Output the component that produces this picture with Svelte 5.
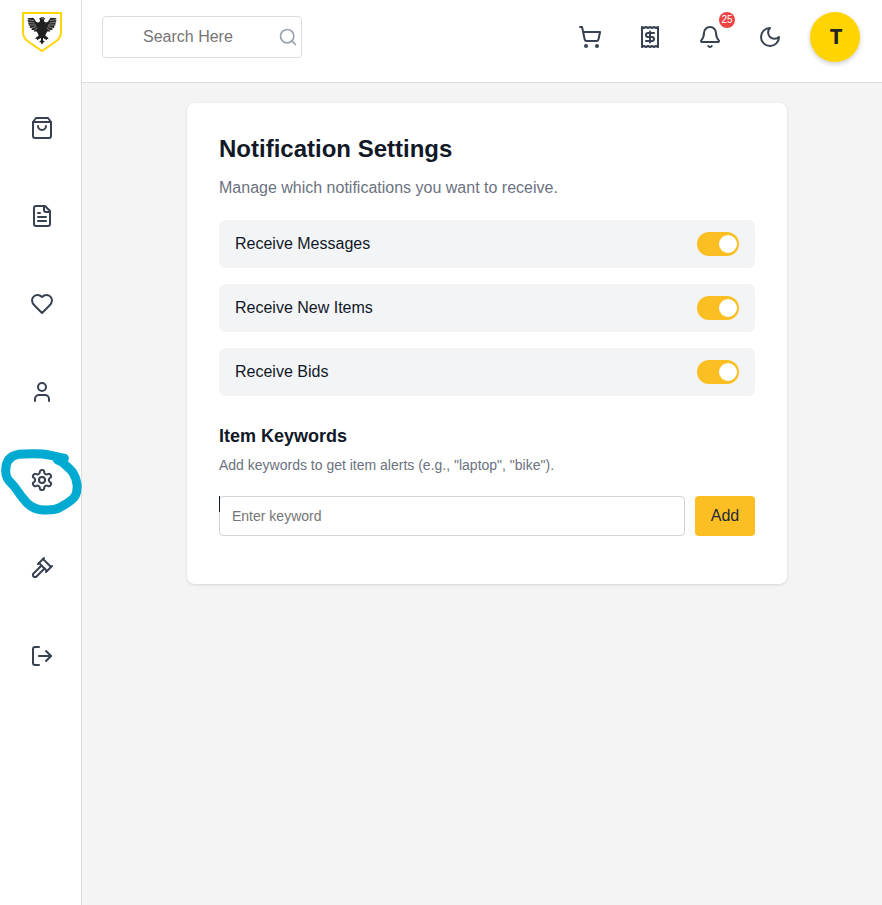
<script>
  const nav = [
    { label: 'Items', paths: ['M6 2 3 6v14a2 2 0 0 0 2 2h14a2 2 0 0 0 2-2V6l-3-4Z', 'M3 6h18', 'M16 10a4 4 0 0 1-8 0'] },
    { label: 'Documents', paths: ['M15 2H6a2 2 0 0 0-2 2v16a2 2 0 0 0 2 2h12a2 2 0 0 0 2-2V7Z', 'M14 2v4a2 2 0 0 0 2 2h4', 'M10 9H8', 'M16 13H8', 'M16 17H8'] },
    { label: 'Favourites', paths: ['M19 14c1.49-1.46 3-3.21 3-5.5A5.5 5.5 0 0 0 16.5 3c-1.76 0-3 .5-4.5 2-1.5-1.5-2.74-2-4.5-2A5.5 5.5 0 0 0 2 8.5c0 2.3 1.5 4.05 3 5.5l7 7Z'] },
    { label: 'Profile', paths: ['M19 21v-2a4 4 0 0 0-4-4H9a4 4 0 0 0-4 4v2', 'M16 7a4 4 0 1 1-8 0a4 4 0 1 1 8 0'] },
    { label: 'Settings', paths: ['M12.22 2h-.44a2 2 0 0 0-2 2v.18a2 2 0 0 1-1 1.73l-.43.25a2 2 0 0 1-2 0l-.15-.08a2 2 0 0 0-2.73.73l-.22.38a2 2 0 0 0 .73 2.73l.15.1a2 2 0 0 1 1 1.72v.51a2 2 0 0 1-1 1.74l-.15.09a2 2 0 0 0-.73 2.73l.22.38a2 2 0 0 0 2.73.73l.15-.08a2 2 0 0 1 2 0l.43.25a2 2 0 0 1 1 1.73V20a2 2 0 0 0 2 2h.44a2 2 0 0 0 2-2v-.18a2 2 0 0 1 1-1.73l.43-.25a2 2 0 0 1 2 0l.15.08a2 2 0 0 0 2.73-.73l.22-.39a2 2 0 0 0-.73-2.73l-.15-.08a2 2 0 0 1-1-1.74v-.5a2 2 0 0 1 1-1.74l.15-.09a2 2 0 0 0 .73-2.73l-.22-.38a2 2 0 0 0-2.73-.73l-.15.08a2 2 0 0 1-2 0l-.43-.25a2 2 0 0 1-1-1.73V4a2 2 0 0 0-2-2z', 'M15 12a3 3 0 1 1-6 0a3 3 0 1 1 6 0'] },
    { label: 'Auctions', paths: ['m14.5 12.5-8 8a2.119 2.119 0 1 1-3-3l8-8', 'm16 16 6-6', 'm8 8 6-6', 'm9 7 8 8', 'm21 11-8-8'] },
    { label: 'Log out', paths: ['M9 21H5a2 2 0 0 1-2-2V5a2 2 0 0 1 2-2h4', 'm16 17 5-5-5-5', 'M21 12H9'] }
  ];
  const actions = [
    { label: 'Cart', paths: ['M9 21a1 1 0 1 1-2 0a1 1 0 1 1 2 0', 'M20 21a1 1 0 1 1-2 0a1 1 0 1 1 2 0', 'M2.05 2.05h2l2.66 12.42a2 2 0 0 0 2 1.58h9.78a2 2 0 0 0 1.95-1.57l1.65-7.43H5.12'] },
    { label: 'Receipts', paths: ['M4 2v20l2-1 2 1 2-1 2 1 2-1 2 1 2-1 2 1V2l-2 1-2-1-2 1-2-1-2 1-2-1-2 1Z', 'M16 8h-6a2 2 0 1 0 0 4h4a2 2 0 1 1 0 4H8', 'M12 17.5v-11'] },
    { label: 'Notifications', badge: 25, paths: ['M10.268 21a2 2 0 0 0 3.464 0', 'M3.262 15.326A1 1 0 0 0 4 17h16a1 1 0 0 0 .74-1.673C19.41 13.956 18 12.499 18 8A6 6 0 0 0 6 8c0 4.499-1.411 5.956-2.738 7.326'] },
    { label: 'Dark mode', paths: ['M12 3a6 6 0 0 0 9 9 9 9 0 1 1-9-9Z'] }
  ];
  let settings = $state([
    { name: 'Receive Messages', on: true },
    { name: 'Receive New Items', on: true },
    { name: 'Receive Bids', on: true }
  ]);
</script>

{#snippet icon(paths)}
  <svg class="icon" viewBox="0 0 24 24" aria-hidden="true">
    {#each paths as d}<path {d} />{/each}
  </svg>
{/snippet}

<div class="app">
  <aside>
    <svg class="logo" viewBox="0 0 120 120" aria-hidden="true">
      <path d="M3 3H117V62C117 76 106 86 95 93L60 117L25 93C14 86 3 76 3 62Z" fill="#fff" stroke="#ffd500" stroke-width="6" />
      <path fill="#202020" d="M51 20 58 16H65L70 20 66 23C65 28 69 33 75 31C81 28 81 20 87 17L104 19 101 22 104 25 101 29 103 32 99 36 101 39 96 43 97 47 91 49 91 54 85 54 83 59 77 58 73 63 70 71 77 76 80 82 75 80 75 85 68 81 63 78V85L69 90 64 91 60 98 56 91 51 90 57 85V78L51 81 45 85 45 80 39 82 43 76 50 71 47 63 43 58 37 59 35 54 29 54 29 49 23 47 24 43 19 39 21 36 17 32 19 29 16 25 19 22 16 19 33 17C39 20 39 28 45 31C51 33 55 28 54 23Z" />
      <path fill="none" stroke="#fff" stroke-width="1.4" d="M16 23 36 26M17 31 38 33M21 39 42 39M27 48 43 44M36 55 46 48M104 23 84 26M103 31 82 33M99 39 78 39M93 48 77 44M84 55 74 48M59 20H66" />
    </svg>
    <nav>
      {#each nav as item}
        <a href="#top" aria-label={item.label}>{@render icon(item.paths)}</a>
      {/each}
    </nav>
    <svg class="marker" viewBox="0 0 300 285" aria-hidden="true">
      <path d="M193 70C178 68 164 63 147 60C125 55 77 56 55 58C30 62 17 78 17 108C17 128 25 136 36 147C50 160 56 176 70 191C84 211 100 222 122 224C144 226 167 225 180 217C200 206 217 198 226 182C235 163 233 136 220 115C213 104 201 94 187 82L172 74" />
    </svg>
  </aside>

  <div class="page">
    <header>
      <div class="search">
        <input type="text" placeholder="Search Here" />
        <svg class="icon small" viewBox="0 0 24 24" aria-hidden="true"><circle cx="11" cy="11" r="8" /><path d="m21 21-4.3-4.3" /></svg>
      </div>
      <div class="actions">
        {#each actions as action}
          <button class="action" aria-label={action.label}>
            {@render icon(action.paths)}
            {#if action.badge}<span class="badge">{action.badge}</span>{/if}
          </button>
        {/each}
        <div class="avatar">T</div>
      </div>
    </header>

    <main>
      <section class="card">
        <h1>Notification Settings</h1>
        <p class="lead">Manage which notifications you want to receive.</p>
        <div class="settings">
          {#each settings as s}
            <div class="setting">
              <span>{s.name}</span>
              <button class="toggle" class:on={s.on} role="switch" aria-checked={s.on} aria-label={s.name} onclick={() => (s.on = !s.on)}><i></i></button>
            </div>
          {/each}
        </div>
        <h2>Item Keywords</h2>
        <p class="hint">Add keywords to get item alerts (e.g., "laptop", "bike").</p>
        <div class="keyword">
          <input type="text" placeholder="Enter keyword" />
          <button class="add">Add</button>
          <span class="caret"></span>
        </div>
      </section>
    </main>
  </div>
</div>

<style>
  * { box-sizing: border-box; }
  .app { display: flex; min-height: 100vh; background: #f4f4f4; color: #111827; font: 16px/24px "Liberation Sans", Arial, sans-serif; }
  button, input { font: inherit; padding: 0; margin: 0; border: 0; }
  button { cursor: pointer; }
  .icon { display: block; width: 24px; height: 24px; fill: none; stroke: #374151; stroke-width: 2; stroke-linecap: round; stroke-linejoin: round; }

  aside { position: relative; width: 82px; flex: none; background: #fff; border-right: 1px solid #ddd; padding: 12px 0 0 22px; }
  .logo { display: block; width: 40px; height: 40px; }
  nav { display: flex; flex-direction: column; gap: 64px; padding: 64px 0 0 8px; }
  nav a { width: 24px; height: 24px; }
  .marker { position: absolute; left: 0; top: 435px; width: 100px; height: 95px; pointer-events: none; overflow: visible; }
  .marker path { fill: none; stroke: #00aad0; stroke-width: 27; stroke-linecap: round; stroke-linejoin: round; }

  .page { flex: 1; min-width: 0; }
  header { display: flex; justify-content: space-between; height: 83px; background: #fff; border-bottom: 1px solid #ddd; padding: 12px 22px 0 20px; }
  .search { display: flex; align-items: center; width: 200px; height: 42px; margin-top: 4px; padding-right: 3px; border: 1px solid #ddd; border-radius: 4px; }
  .search input { flex: 1; min-width: 0; height: 40px; padding-left: 40px; background: transparent; outline: none; color: #333; }
  input::placeholder { color: #757575; opacity: 1; }
  .small { width: 20px; height: 20px; stroke: #9ca3af; flex: none; }
  .actions { display: flex; align-items: center; height: 50px; gap: 36px; }
  .action { position: relative; width: 24px; height: 24px; background: none; }
  .badge { position: absolute; left: 21px; top: -13px; width: 16px; height: 16px; border-radius: 50%; background: #ef4444; color: #fff; font-size: 10px; line-height: 16px; text-align: center; }
  .avatar { width: 50px; height: 50px; margin-left: -8px; border-radius: 50%; background: #ffd400; box-shadow: 0 2px 5px rgba(0, 0, 0, .2); color: #222; font-family: "Open Sans", "Liberation Sans", sans-serif; font-size: 22px; font-weight: 700; line-height: 47px; text-align: center; padding-left: 2px; }

  main { display: flex; justify-content: center; padding: 20px 0 0 10px; }
  .card { width: 600px; height: 481px; padding: 30px 32px 0; background: #fff; border-radius: 8px; box-shadow: 0 1px 3px rgba(0, 0, 0, .12); }
  h1, h2, p { margin: 0; }
  h1 { font-size: 24px; line-height: 32px; font-weight: 700; }
  .lead { margin-top: 11px; color: #6b7280; }
  .settings { display: flex; flex-direction: column; gap: 16px; margin-top: 20px; }
  .setting { display: flex; align-items: center; justify-content: space-between; height: 48px; padding: 0 16px; background: #f3f4f6; border-radius: 6px; }
  .toggle { display: flex; align-items: center; width: 42px; height: 24px; padding: 0 2px; border-radius: 12px; background: #d1d5db; }
  .toggle i { width: 18px; height: 18px; border-radius: 50%; background: #fff; }
  .toggle.on { justify-content: flex-end; background: #fbbf24; }
  h2 { margin-top: 26px; font-size: 18px; line-height: 28px; font-weight: 700; }
  .hint { margin-top: 5px; font-size: 14px; line-height: 20px; color: #6b7280; }
  .keyword { position: relative; display: flex; gap: 10px; margin-top: 21px; }
  .keyword input { flex: 1; min-width: 0; height: 40px; padding: 0 12px; border: 1px solid #d1d5db; border-radius: 4px; font-size: 14px; background: #fff; }
  .add { width: 60px; height: 40px; background: #fbbf24; color: #1f2937; border-radius: 4px; }
  .caret { position: absolute; left: 0; top: 0; width: 1px; height: 16px; background: #111827; }
</style>
